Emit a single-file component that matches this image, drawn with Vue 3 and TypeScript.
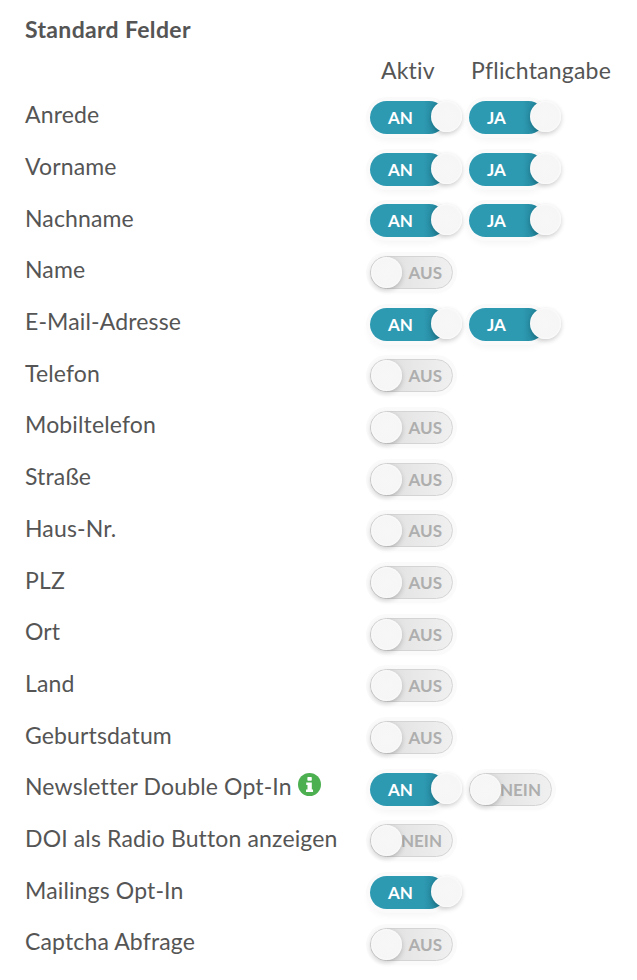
<script setup lang="ts">
interface Tog { on: boolean; text: string }
interface Row { label: string; info?: boolean; a: Tog; b?: Tog }
const AN: Tog = { on: true, text: 'AN' }
const AUS: Tog = { on: false, text: 'AUS' }
const JA: Tog = { on: true, text: 'JA' }
const NEIN: Tog = { on: false, text: 'NEIN' }
const rows: Row[] = [
  { label: 'Anrede', a: AN, b: JA },
  { label: 'Vorname', a: AN, b: JA },
  { label: 'Nachname', a: AN, b: JA },
  { label: 'Name', a: AUS },
  { label: 'E-Mail-Adresse', a: AN, b: JA },
  { label: 'Telefon', a: AUS },
  { label: 'Mobiltelefon', a: AUS },
  { label: 'Straße', a: AUS },
  { label: 'Haus-Nr.', a: AUS },
  { label: 'PLZ', a: AUS },
  { label: 'Ort', a: AUS },
  { label: 'Land', a: AUS },
  { label: 'Geburtsdatum', a: AUS },
  { label: 'Newsletter Double Opt-In', info: true, a: AN, b: NEIN },
  { label: 'DOI als Radio Button anzeigen', a: NEIN },
  { label: 'Mailings Opt-In', a: AN },
  { label: 'Captcha Abfrage', a: AUS },
]
</script>

<template>
  <div class="page">
    <h2 class="title">Standard Felder</h2>
    <div class="heads">
      <span class="head-a">Aktiv</span>
      <span class="head-b">Pflichtangabe</span>
    </div>
    <div v-for="r in rows" :key="r.label" class="row">
      <div class="label">
        <span>{{ r.label }}</span>
        <svg v-if="r.info" class="info" viewBox="0 0 24 24" aria-hidden="true">
          <circle cx="12" cy="12" r="12" fill="#4caf50" />
          <rect x="9.8" y="4.2" width="4.6" height="3.9" rx="0.7" fill="#fff" />
          <path d="M8.6 10h5.8v7.2h1.3v2.6H8.4v-2.6h1.5v-4.6H8.6z" fill="#fff" />
        </svg>
      </div>
      <div class="toggles">
        <div class="toggle" :class="r.a.on ? 'on' : 'off'">
          <span class="txt">{{ r.a.text }}</span>
          <span class="knob"></span>
        </div>
        <div v-if="r.b" class="toggle" :class="r.b.on ? 'on' : 'off'">
          <span class="txt">{{ r.b.text }}</span>
          <span class="knob"></span>
        </div>
      </div>
    </div>
  </div>
</template>

<style scoped>
.page {
  width: 637px;
  height: 980px;
  box-sizing: border-box;
  padding: 15px 0 0 25px;
  font-family: Lato, "Open Sans", sans-serif;
  color: #555;
  background: #fff;
  overflow: hidden;
}
.title {
  margin: 0;
  font-size: 23px;
  letter-spacing: .33px;
  line-height: 28px;
  font-weight: 700;
}
.heads {
  display: flex;
  height: 27px;
  margin-top: 14px;
  margin-bottom: 7.5px;
  font-size: 23px;
  letter-spacing: .2px;
  line-height: 27px;
}
.head-a { margin-left: 356px; width: 90px; }
.head-b { white-space: nowrap; }
.row {
  display: flex;
  align-items: center;
  height: 51.7px;
}
.label {
  width: 345px;
  display: flex;
  align-items: center;
  gap: 6px;
  font-size: 23px;
  letter-spacing: .14px;
  line-height: 28px;
  position: relative;
  top: -3px;
}
.info { width: 23px; height: 23px; flex: none; margin-top: -3px; }
.toggles { display: flex; gap: 16px; }
.toggle {
  position: relative;
  width: 83px;
  height: 33px;
  border-radius: 17px;
  box-sizing: border-box;
  font-size: 17px;
  font-weight: 700;
}
.toggle.on {
  background: linear-gradient(90deg, #2e9ab2 0%, #2e9ab2 70%, #1b7a90 100%);
  color: #fff;
  width: 76px;
  margin-right: 7px;
  box-shadow: 0 0 0 4px #fafafa, 0 5px 8px rgba(0,0,0,.06);
}
.toggle.off {
  background: linear-gradient(90deg, #d6d6d6, #e6e6e6 45%, #f0f0f0);
  border: 1px solid #d4d4d4;
  color: #aeaeae;
  box-shadow: 0 0 0 4px #fafafa, 0 3px 5px rgba(0,0,0,.03);
}
.txt {
  position: absolute;
  top: 0;
  line-height: 33px;
  white-space: nowrap;
}
.on .txt { left: 18px; }
.off .txt { right: 10px; line-height: 31px; }
.knob {
  position: absolute;
  width: 31px;
  height: 31px;
  box-sizing: border-box;
  border-radius: 50%;
  background: radial-gradient(circle, #f7f7f7 0%, #f6f6f6 62%, #fff 80%);
  box-shadow: 0 2px 5px rgba(0,0,0,.2);
}
.on .knob { right: -16px; top: 0; }
.off .knob { left: 0; top: 0; }
</style>
